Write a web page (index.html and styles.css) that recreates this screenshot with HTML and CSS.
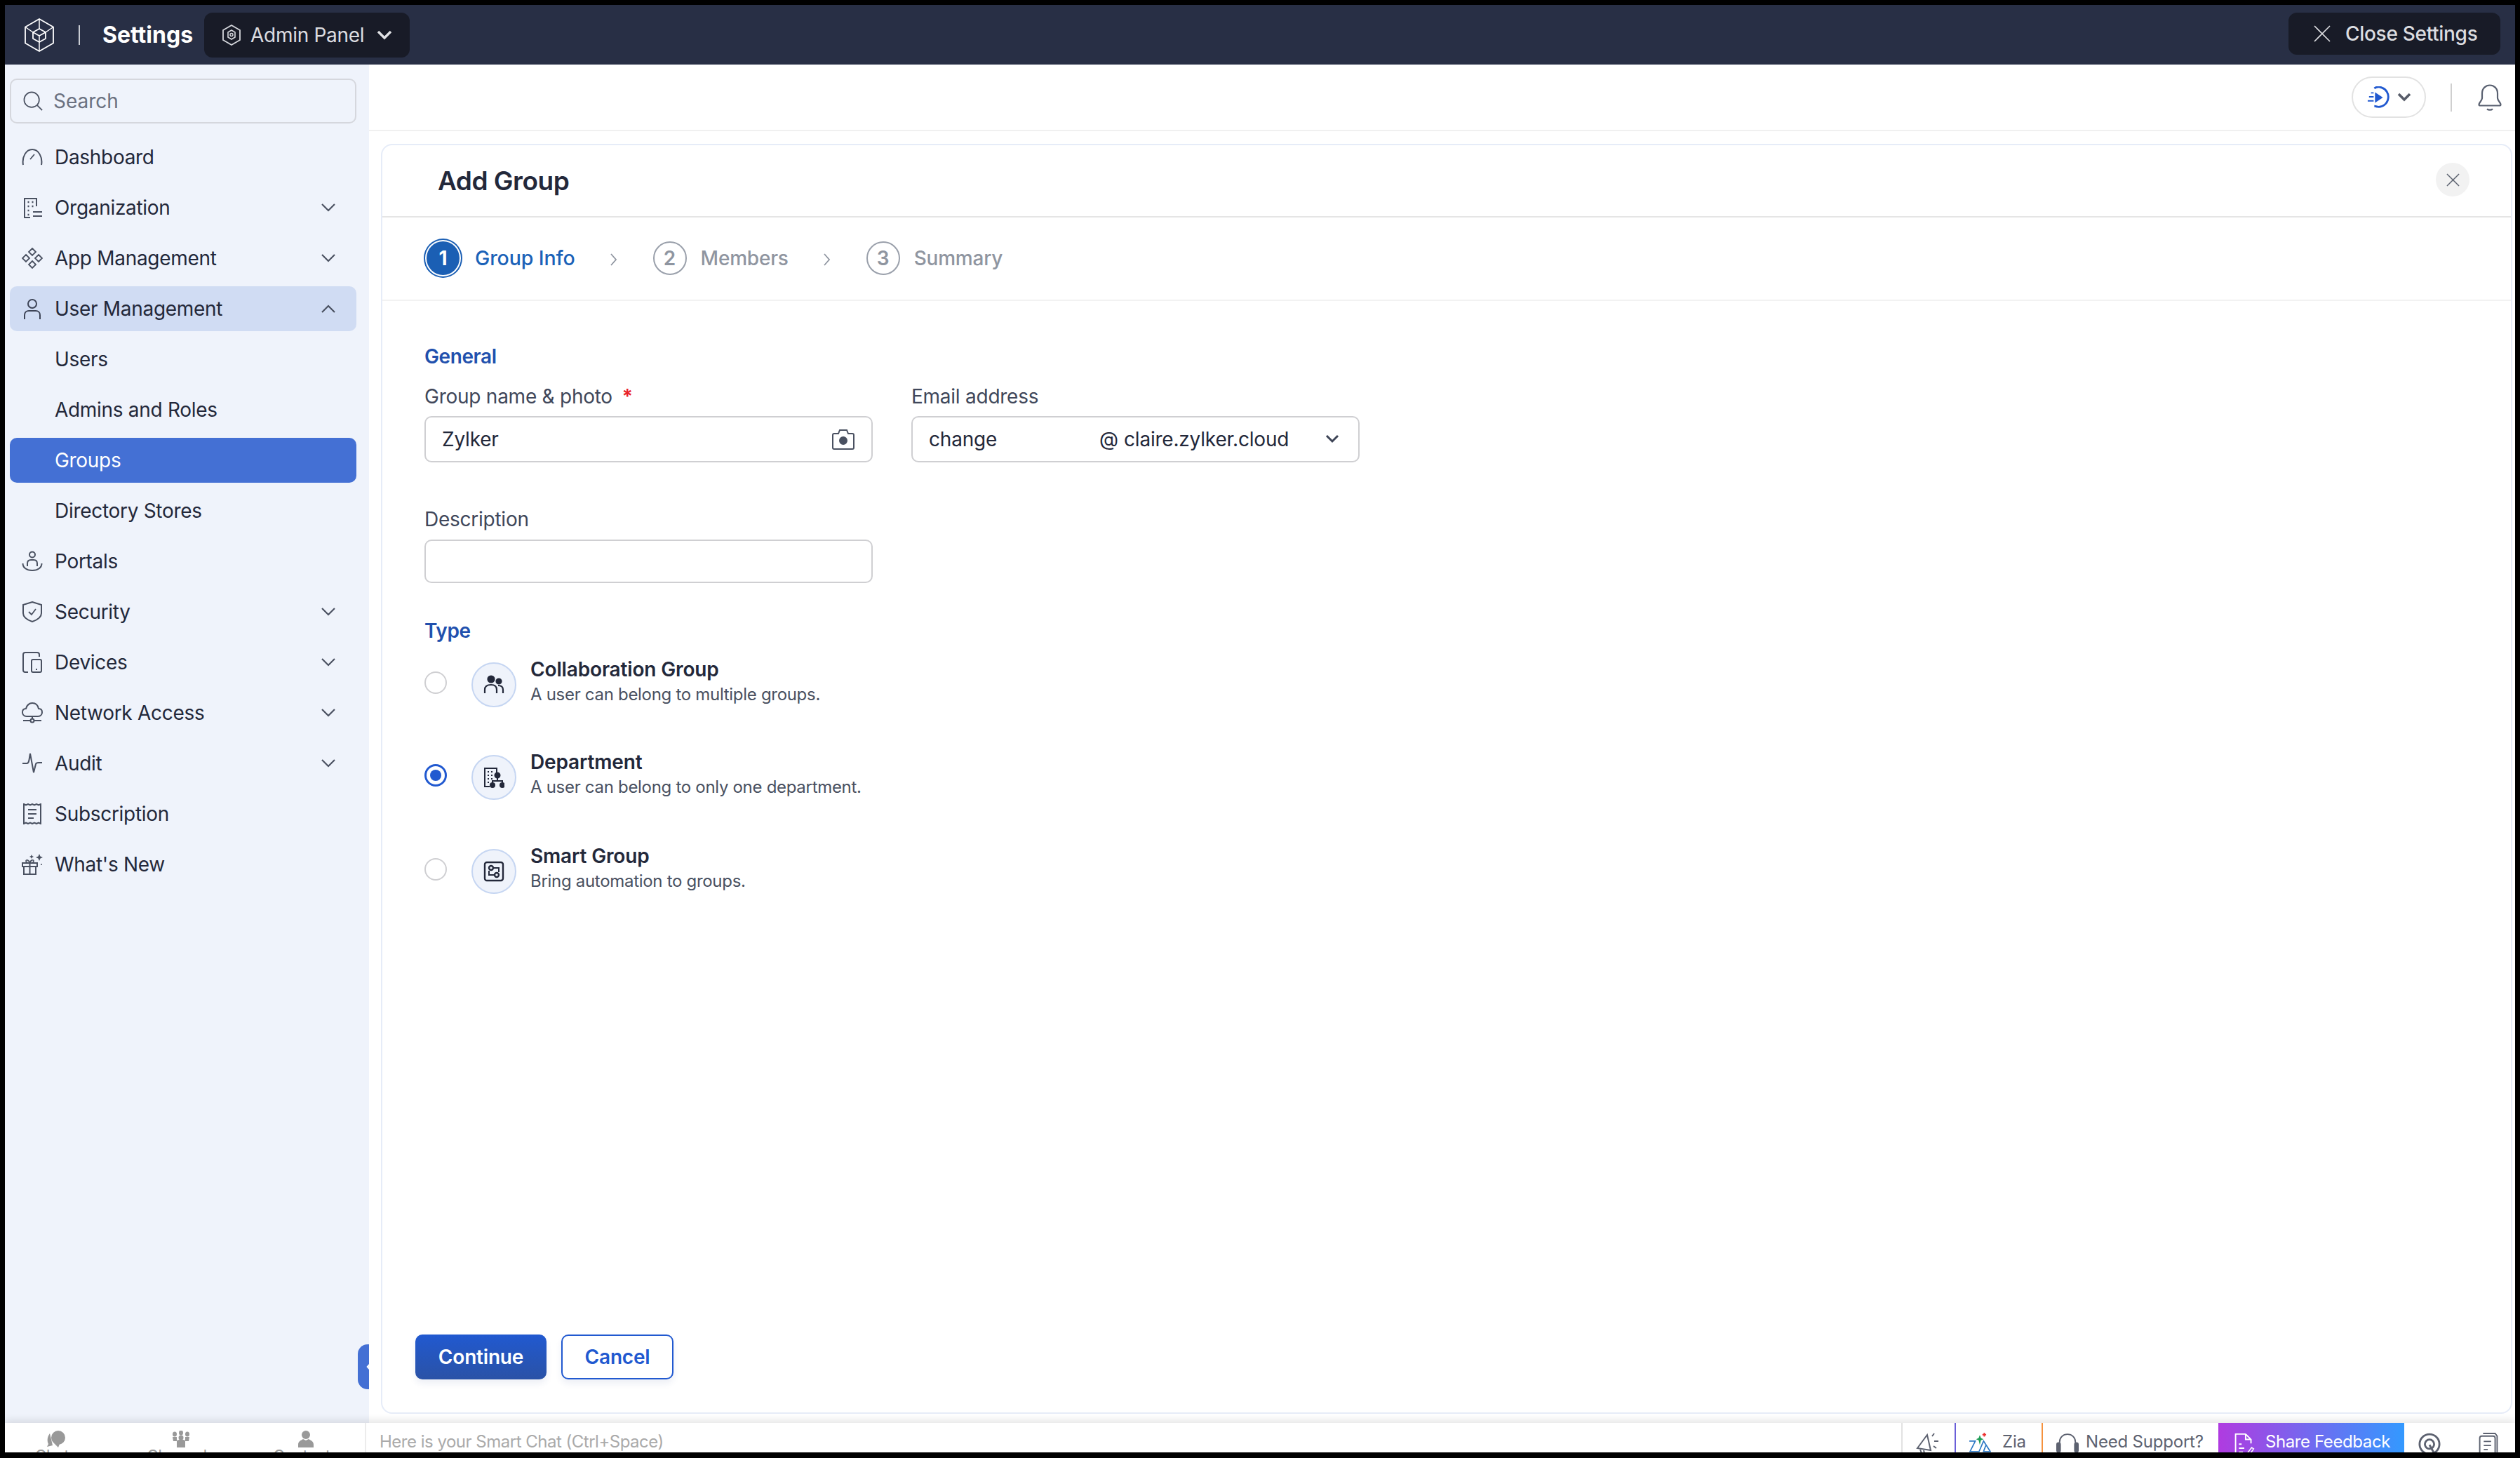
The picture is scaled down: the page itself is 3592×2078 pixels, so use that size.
FILE: index.html
```html
<!DOCTYPE html>
<html lang="en">

<head>
  <meta charset="UTF-8">
  <meta name="viewport" content="width=device-width, initial-scale=1.0">
  <title>Add Group</title>
  <link rel="stylesheet" href="styles.css">
</head>

<body>
  <div class="app">
    <div class="top_bar">
      <svg class="logo" viewBox="0 0 42 48" fill="none" stroke="#fff" stroke-width="1.8" stroke-linejoin="round">
        <path d="M21 1 41 12.5V35.5L21 47 1 35.5V12.5Z" />
        <path d="M21 15 30 20V29L21 34 12 29V20Z" />
        <path d="M12 20 21 25 30 20M21 25V34M21 34V47M1 12.5 12 20M41 12.5 30 20M21 1V15" stroke-width="1.5" />
      </svg>
      <div class="top_sep"></div>
      <div class="top_title">Settings</div>
      <div class="admin_btn">
        <svg class="admin_icon" viewBox="0 0 26 30" fill="none" stroke="#d5d7dc" stroke-width="1.8">
          <path d="M13 1 25 8V22L13 29 1 22V8Z" />
          <path d="M13 8 18 11V18L13 21 8 18V11Z" stroke-width="1.6" />
          <circle cx="13" cy="14.5" r="2" stroke-width="1.4" />
        </svg>
        <span>Admin Panel</span>
        <svg class="admin_arrow" viewBox="0 0 22 14" fill="none" stroke="#e2e3e6" stroke-width="3.4">
          <path d="M2 2 11 11 20 2" />
        </svg>
      </div>
      <div class="close_settings">
        <svg class="close_icon" viewBox="0 0 24 24" fill="none" stroke="#dcdde0" stroke-width="1.6">
          <path d="M1 1 23 23M23 1 1 23" />
        </svg>
        <span>Close Settings</span>
      </div>
    </div>

    <div class="middle">
      <div class="side">
        <div class="search">
          <svg class="search_icon" viewBox="0 0 30 30" fill="none" stroke="#4a5161" stroke-width="1.8">
            <circle cx="13" cy="13" r="11.5" />
            <path d="M21.5 21.5 29 29" />
          </svg>
          <span>Search</span>
        </div>

        <div class="side_item">
          <svg class="side_icon" viewBox="0 0 30 30" fill="none" stroke="#4a5161" stroke-width="2">
            <path d="M2 26C0 15 6 4 15 4s15 11 13 22" />
            <path d="M12 18 18 11" stroke-width="1.8" />
          </svg>
          <span class="side_text">Dashboard</span>
        </div>
        <div class="side_item">
          <svg class="side_icon" viewBox="0 0 30 30" fill="none" stroke="#4a5161" stroke-width="2">
            <path d="M21 13V2H4V29H12" />
            <path d="M16 21H29M16 27H29" />
            <path d="M8.5 7H10.5M14.5 7H16.5M8.5 13H10.5M14.5 13H16.5M8.5 19H10.5M8.5 25H10.5" stroke-width="2.4" />
          </svg>
          <span class="side_text">Organization</span>
          <svg class="side_arrow" viewBox="0 0 20 12" fill="none" stroke="#4a5161" stroke-width="2.2"><path d="M1 1 10 10 19 1" /></svg>
        </div>
        <div class="side_item">
          <svg class="side_icon" viewBox="0 0 30 30" fill="none" stroke="#4a5161" stroke-width="1.8">
            <path d="M15 1 20 6 15 11 10 6ZM15 19 20 24 15 29 10 24ZM6 10 11 15 6 20 1 15ZM24 10 29 15 24 20 19 15Z" />
          </svg>
          <span class="side_text">App Management</span>
          <svg class="side_arrow" viewBox="0 0 20 12" fill="none" stroke="#4a5161" stroke-width="2.2"><path d="M1 1 10 10 19 1" /></svg>
        </div>
        <div class="side_item side_open">
          <svg class="side_icon" viewBox="0 0 30 30" fill="none" stroke="#3d4456" stroke-width="2">
            <circle cx="15" cy="8" r="6" />
            <path d="M4 30V24C4 20 7 18 10 18H20C23 18 26 20 26 24V30" />
          </svg>
          <span class="side_text">User Management</span>
          <svg class="side_arrow" viewBox="0 0 20 12" fill="none" stroke="#4a5161" stroke-width="2.2"><path d="M1 11 10 2 19 11" /></svg>
        </div>
        <div class="side_item"><span class="side_text side_sub">Users</span></div>
        <div class="side_item"><span class="side_text side_sub">Admins and Roles</span></div>
        <div class="side_item side_active"><span class="side_text side_sub">Groups</span></div>
        <div class="side_item"><span class="side_text side_sub">Directory Stores</span></div>
        <div class="side_item">
          <svg class="side_icon" viewBox="0 0 30 30" fill="none" stroke="#4a5161" stroke-width="2">
            <circle cx="15" cy="5.5" r="4" />
            <path d="M1.5 18C1.5 24 7 28 15 28S28.500 24 28.500 18" />
            <path d="M8 22V18C8 15 10 13 13 13H17C20 13 22 15 22 18V22" />
          </svg>
          <span class="side_text">Portals</span>
        </div>
        <div class="side_item">
          <svg class="side_icon" viewBox="0 0 30 30" fill="none" stroke="#4a5161" stroke-width="2">
            <path d="M15 1 28 5V17C28 23 21 27 15 29 9 27 2 23 2 17V5Z" />
            <path d="M10 15 14 19 20 11" stroke-width="1.8" />
          </svg>
          <span class="side_text">Security</span>
          <svg class="side_arrow" viewBox="0 0 20 12" fill="none" stroke="#4a5161" stroke-width="2.2"><path d="M1 1 10 10 19 1" /></svg>
        </div>
        <div class="side_item">
          <svg class="side_icon" viewBox="0 0 30 30" fill="none" stroke="#4a5161" stroke-width="2">
            <path d="M9 29H5C3 29 2 28 2 26V4C2 2 3 1 5 1H22C24 1 25 2 25 4V7" />
            <rect x="14" y="11" width="14" height="18" rx="2" />
            <path d="M20 25H22" />
          </svg>
          <span class="side_text">Devices</span>
          <svg class="side_arrow" viewBox="0 0 20 12" fill="none" stroke="#4a5161" stroke-width="2.2"><path d="M1 1 10 10 19 1" /></svg>
        </div>
        <div class="side_item">
          <svg class="side_icon" viewBox="0 0 30 30" fill="none" stroke="#4a5161" stroke-width="2">
            <path d="M7 20C3 20 1 17 1 14 1 11 3 9 6 9 7 4 11 1 15 1 20 1 23 4 24 9 27 9 29 11 29 14 29 17 27 20 23 20Z" />
            <path d="M15 20V24M2 26H12M18 26H28" />
            <circle cx="15" cy="26" r="2.500" />
          </svg>
          <span class="side_text">Network Access</span>
          <svg class="side_arrow" viewBox="0 0 20 12" fill="none" stroke="#4a5161" stroke-width="2.2"><path d="M1 1 10 10 19 1" /></svg>
        </div>
        <div class="side_item">
          <svg class="side_icon" viewBox="0 0 30 30" fill="none" stroke="#4a5161" stroke-width="2">
            <path d="M1 15H7C9 15 10 13 10.500 10L12 1 17 28 20 16C20.500 14 22 14 24 14H29" />
          </svg>
          <span class="side_text">Audit</span>
          <svg class="side_arrow" viewBox="0 0 20 12" fill="none" stroke="#4a5161" stroke-width="2.2"><path d="M1 1 10 10 19 1" /></svg>
        </div>
        <div class="side_item">
          <svg class="side_icon" viewBox="0 0 30 30" fill="none" stroke="#4a5161" stroke-width="2">
            <path d="M3 1 6 2.500 9 1 12 2.500 15 1 18 2.500 21 1 24 2.500 27 1V29L24 27.500 21 29 18 27.500 15 29 12 27.500 9 29 6 27.500 3 29Z" />
            <path d="M9 9H21M9 15H21M9 21H17" />
          </svg>
          <span class="side_text">Subscription</span>
        </div>
        <div class="side_item">
          <svg class="side_icon" viewBox="0 0 30 30" fill="none" stroke="#4a5161" stroke-width="2">
            <rect x="1" y="13" width="21" height="5" />
            <path d="M3 18V29H20V18M11.500 13V29" />
            <path d="M11.500 13C8 13 6 12 6 10 6 8 10 8 11.500 13ZM11.500 13C15 13 17 12 17 10 17 8 13 8 11.500 13Z" stroke-width="1.6" />
            <path d="M25 0 26.500 3.500 30 5 26.500 6.500 25 10 23.500 6.500 20 5 23.500 3.500Z" fill="#4a5161" stroke="none" />
            <path d="M14 1 15 3 17 4 15 5 14 7 13 5 11 4 13 3Z" fill="#4a5161" stroke="none" />
            <circle cx="28" cy="15" r="1" fill="#4a5161" stroke="none" />
          </svg>
          <span class="side_text">What's New</span>
        </div>
        <div class="side_handle">
          <svg class="handle_arrow" viewBox="0 0 10 20" fill="none" stroke="#fff" stroke-width="2.4"><path d="M9 2 2 10 9 18" /></svg>
        </div>
      </div>

      <div class="content">
        <div class="sub_bar">
          <div class="play_pill">
            <svg class="play_icon" viewBox="0 0 34 34" fill="none">
              <path d="M11 3C14 1 18 0 22 2 29 4 33 11 32 18 31 26 24 32 16 31 14 31 13 30 11 30" stroke="#2159d0" stroke-width="3" />
              <path d="M12 9 24 17 12 25Z" fill="#2159d0" />
              <path d="M6 10H10M3 16H10M1 22H10" stroke="#2159d0" stroke-width="2" />
            </svg>
            <svg class="pill_arrow" viewBox="0 0 20 14" fill="none" stroke="#575c69" stroke-width="3.600"><path d="M2 2 10 10 18 2" /></svg>
          </div>
          <div class="sub_sep"></div>
          <svg class="bell" viewBox="0 0 34 38" fill="none" stroke="#596070" stroke-width="2.200">
            <path d="M1.500 29C1.500 26 5 25 6 20V13C6 6 11 1.500 17 1.500S28 6 28 13V20C29 25 32.500 26 32.500 29 32.500 30 31.500 30.500 30.500 30.500H3.500C2.500 30.500 1.500 30 1.500 29Z" />
            <path d="M13 35.500C15 37 19 37 21 35.500" />
          </svg>
        </div>

        <div class="card">
          <div class="card_head">
            <div class="card_title">Add Group</div>
            <div class="card_close">
              <svg class="card_close_icon" viewBox="0 0 20 20" fill="none" stroke="#5f6572" stroke-width="1.600"><path d="M1 1 19 19M19 1 1 19" /></svg>
            </div>
          </div>

          <div class="steps">
            <div class="step_on">
              <div class="step_on_num">1</div>
            </div>
            <div class="step_text step_text_on">Group Info</div>
            <svg class="step_arrow" viewBox="0 0 10 18" fill="none" stroke="#8f95a0" stroke-width="1.800"><path d="M1 1 8 9 1 17" /></svg>
            <div class="step_num">2</div>
            <div class="step_text">Members</div>
            <svg class="step_arrow" viewBox="0 0 10 18" fill="none" stroke="#8f95a0" stroke-width="1.800"><path d="M1 1 8 9 1 17" /></svg>
            <div class="step_num">3</div>
            <div class="step_text">Summary</div>
          </div>

          <div class="form">
            <div class="form_head">General</div>
            <div class="field_row">
              <div class="field">
                <div class="field_label">Group name &amp; photo <span class="req">*</span></div>
                <div class="field_input">
                  <span>Zylker</span>
                  <svg class="camera" viewBox="0 0 32 30" fill="none" stroke="#4a5161" stroke-width="2">
                    <path d="M3 7H9L11 2H21L23 7H29C30 7 31 8 31 9V27C31 28 30 29 29 29H3C2 29 1 28 1 27V9C1 8 2 7 3 7Z" />
                    <circle cx="16" cy="17" r="5" fill="#4a5161" />
                  </svg>
                </div>
              </div>
              <div class="field">
                <div class="field_label">Email address</div>
                <div class="field_input">
                  <span class="mail_name">change</span>
                  <span class="mail_at">@</span>
                  <span class="mail_domain">claire.zylker.cloud</span>
                  <svg class="mail_arrow" viewBox="0 0 20 14" fill="none" stroke="#3d4456" stroke-width="3"><path d="M2 2 10 10 18 2" /></svg>
                </div>
              </div>
            </div>

            <div class="field field_desc">
              <div class="field_label">Description</div>
              <div class="field_input field_input_desc"></div>
            </div>

            <div class="form_head type_head">Type</div>
            <div class="type_list">
              <div class="type_row">
                <div class="radio"></div>
                <div class="type_icon">
                  <svg viewBox="0 0 30 30" fill="none" stroke="#23283a" stroke-width="2.200">
                    <circle cx="11" cy="7" r="4.500" fill="#23283a" />
                    <circle cx="22" cy="10" r="3.500" fill="#23283a" />
                    <path d="M2 27V22C2 17 6 15 11 15S19 17 19 22V27" />
                    <path d="M21 16C25 16 28 18 28 22V27" />
                  </svg>
                </div>
                <div class="type_text">
                  <div class="type_title">Collaboration Group</div>
                  <div class="type_sub">A user can belong to multiple groups.</div>
                </div>
              </div>
              <div class="type_row">
                <div class="radio radio_on"></div>
                <div class="type_icon">
                  <svg viewBox="0 0 30 30" fill="none" stroke="#23283a" stroke-width="2">
                    <path d="M19 9V2H2V28H9" />
                    <path d="M6 7H8M11 7H13M6 12H8M11 12H13M6 17H8M11 17H13M6 22H8" stroke-width="1.800" />
                    <circle cx="20" cy="12" r="3.500" fill="#23283a" />
                    <path d="M20 15V20M13 26V20H27V26" />
                    <circle cx="13" cy="26" r="3" fill="#23283a" />
                    <circle cx="27" cy="26" r="3" fill="#23283a" />
                  </svg>
                </div>
                <div class="type_text">
                  <div class="type_title">Department</div>
                  <div class="type_sub">A user can belong to only one department.</div>
                </div>
              </div>
              <div class="type_row type_row_last">
                <div class="radio"></div>
                <div class="type_icon">
                  <svg viewBox="0 0 30 30" fill="none" stroke="#23283a" stroke-width="2.400">
                    <rect x="2" y="2" width="26" height="26" rx="3" />
                    <circle cx="11" cy="10" r="3" />
                    <circle cx="19" cy="20" r="3" />
                    <path d="M14 10H22V16M16 20H8V14" stroke-width="2" />
                  </svg>
                </div>
                <div class="type_text">
                  <div class="type_title">Smart Group</div>
                  <div class="type_sub">Bring automation to groups.</div>
                </div>
              </div>
            </div>
          </div>

          <div class="actions">
            <button type="button" class="btn_main">Continue</button>
            <button type="button" class="btn_cancel">Cancel</button>
          </div>
        </div>
      </div>
    </div>

    <div class="foot">
      <div class="foot_tabs">
        <div class="foot_tab">
          <svg viewBox="0 0 28 24" fill="#999">
            <circle cx="17" cy="10" r="10" />
            <path d="M11 18 17 24 19 19Z" />
            <path d="M5 4C1 9 1 15 3 19L1 23 9 21Z" />
          </svg>
          <div class="foot_tab_text">Chats</div>
        </div>
        <div class="foot_tab">
          <svg viewBox="0 0 28 24" fill="#999">
            <ellipse cx="14" cy="3" rx="3" ry="3.500" />
            <ellipse cx="5" cy="5" rx="3" ry="3.500" />
            <ellipse cx="23" cy="5" rx="3" ry="3.500" />
            <circle cx="14" cy="10" r="3.500" />
            <path d="M2 9H8L8 15H3ZM20 9H26L25 15H20ZM8 15C8 13 11 13 14 13S20 13 20 15V24H8Z" />
          </svg>
          <div class="foot_tab_text">Channels</div>
        </div>
        <div class="foot_tab">
          <svg viewBox="0 0 28 24" fill="#999">
            <ellipse cx="14" cy="6" rx="6" ry="6" />
            <path d="M3 24V20C3 15 7 14 10 12L14 14 18 12C21 14 25 15 25 20V24Z" />
          </svg>
          <div class="foot_tab_text">Contacts</div>
        </div>
      </div>
      <div class="foot_chat">Here is your Smart Chat (Ctrl+Space)</div>
      <div class="foot_cell foot_news">
        <svg class="news_icon" viewBox="0 0 34 30" fill="none" stroke="#5d6270" stroke-width="2">
          <path d="M2 22 16 3 21 25ZM6 24 8 29H12L11 25" />
          <path d="M23 5 26 1M26 12H32M25 19 29 22" />
        </svg>
      </div>
      <div class="foot_cell foot_zia">
        <svg class="zia_logo" viewBox="0 0 30 28" fill="none">
          <path d="M15 3 16.500 7 20 8.500 16.500 10 15 16 13.500 10 10 8.500 13.500 7Z" fill="#1f9d55" />
          <path d="M21 0V5M18.500 2.500H23.500" stroke="#e33" stroke-width="1.800" />
          <path d="M1 11H9L2 25H14L20 11 29 25H20L23 17" stroke="#2d78c4" stroke-width="1.600" />
        </svg>
        <span>Zia</span>
      </div>
      <div class="foot_cell foot_help">
        <svg class="foot_icon" viewBox="0 0 34 44" fill="none" stroke="#5d6270" stroke-width="2">
          <path d="M5 18V14C5 7 10 2 17 2S29 7 29 14V18" />
          <rect x="1" y="15" width="5" height="14" rx="2.500" fill="#5d6270" />
          <rect x="28" y="15" width="5" height="14" rx="2.500" fill="#5d6270" />
          <path d="M30 29C30 34 26 37 20 38" />
        </svg>
        <span>Need Support?</span>
      </div>
      <div class="foot_share">
        <svg class="foot_icon" viewBox="0 0 32 44" fill="none" stroke="#fff" stroke-width="2">
          <path d="M18 2H3V38H12M18 2 26 10V16M18 2V10H26" />
          <path d="M8 17H12M8 23H16M8 29H14" />
          <path d="M16 40 18 34 27 22 30 24 21 37Z" stroke-width="1.600" />
        </svg>
        <span>Share Feedback</span>
      </div>
      <div class="foot_cell foot_target">
        <svg class="foot_icon" viewBox="0 0 34 44" fill="none" stroke="#5d6270" stroke-width="3">
          <circle cx="17" cy="17" r="15" />
          <circle cx="17" cy="17" r="7" />
          <path d="M17 18 28 38" />
        </svg>
      </div>
      <div class="foot_cell foot_notes">
        <svg class="foot_icon" viewBox="0 0 30 44" fill="none" stroke="#5d6270" stroke-width="2">
          <path d="M7 1H25L28 5V29" />
          <rect x="2" y="5" width="23" height="32" rx="3" />
          <path d="M8 13H19M8 19H19M8 25H14" />
        </svg>
      </div>
    </div>
  </div>
</body>

</html>
```

FILE: styles.css
```css
* {
  box-sizing: border-box;
}

html,
body {
  margin: 0;
  height: 100%;
}

body {
  padding: 7px 7px 8px 7px;
  background-color: black;
  overflow: hidden;
  font-family: Inter, "Noto Sans", sans-serif;
  font-size: 28px;
  color: #23283a;
}

.app {
  width: 3578px;
  height: 2063px;

  display: flex;
  flex-direction: column;

  background-color: white;
  overflow: hidden;
}

/* top bar */
.top_bar {
  height: 85px;
  flex: none;

  display: flex;
  align-items: center;

  padding: 0 21px 0 28px;
  background-color: #282f45;
  color: white;
}

.logo {
  width: 42px;
  height: 48px;
}

.top_sep {
  width: 2px;
  height: 28px;
  margin-left: 35px;
  background-color: #c9ccd3;
}

.top_title {
  margin-left: 32px;
  font-size: 32px;
  font-weight: 700;
}

.admin_btn {
  width: 293px;
  height: 64px;
  margin-left: 16px;

  display: flex;
  align-items: center;

  padding-left: 26px;
  border-radius: 12px;
  background-color: #181b27;
  color: #dcdde0;
  font-size: 28px;
  letter-spacing: -0.3px;
}

.admin_icon {
  width: 26px;
  height: 30px;
  margin-right: 14px;
}

.admin_arrow {
  width: 22px;
  height: 14px;
  margin-left: 18px;
}

.close_settings {
  width: 302px;
  height: 60px;
  margin-left: auto;
  margin-top: -4px;

  display: flex;
  align-items: center;

  padding-left: 36px;
  border-radius: 12px;
  background-color: #181b27;
  color: #dcdde0;
  font-size: 28px;
  font-weight: 500;
  letter-spacing: -0.3px;
}

.close_icon {
  width: 24px;
  height: 24px;
  margin-right: 21px;
}

.middle {
  flex: 1;
  min-height: 0;

  display: flex;
}

/* side menu */
.side {
  width: 519px;
  flex: none;
  position: relative;

  padding: 20px 18px 0 7px;
  background-color: #eff3fb;
}

.search {
  height: 64px;
  margin-bottom: 16px;

  display: flex;
  align-items: center;

  padding-left: 17px;
  border: 2px solid #d5d7dd;
  border-radius: 10px;
  color: #6b7180;
}

.search_icon {
  width: 28px;
  height: 28px;
  margin-right: 15px;
}

.side_item {
  height: 64px;
  margin-bottom: 8px;

  display: flex;
  align-items: center;

  padding: 0 30px 0 17px;
  border-radius: 10px;
  letter-spacing: -0.3px;
}

.side_icon {
  width: 30px;
  height: 30px;
  flex: none;
  margin-right: 17px;
}

.side_sub {
  margin-left: 47px;
}

.side_arrow {
  width: 20px;
  height: 12px;
  margin-left: auto;
}

.side_open {
  background-color: #d0dcf3;
}

.side_active {
  background-color: #4470d4;
  color: white;
}

.side_handle {
  width: 16px;
  height: 64px;

  position: absolute;
  right: 0;
  bottom: 48px;

  border-radius: 14px 0 0 14px;
  background-color: #4470d4;
  overflow: hidden;
}

.handle_arrow {
  width: 10px;
  height: 20px;

  position: absolute;
  left: 12px;
  top: 22px;
}

/* main area */
.content {
  flex: 1;
  min-width: 0;

  display: flex;
  flex-direction: column;

  padding-left: 17px;
}

.sub_bar {
  height: 95px;
  flex: none;
  margin-left: -17px;

  display: flex;
  align-items: center;
  justify-content: flex-end;

  padding: 0 19px 0 0;
  border-bottom: 2px solid #f0f0f0;
}

.play_pill {
  width: 106px;
  height: 59px;

  display: flex;
  align-items: center;

  padding-left: 20px;
  border: 2px solid #e2e2e2;
  border-radius: 30px;
}

.play_icon {
  width: 32px;
  height: 32px;
}

.pill_arrow {
  width: 20px;
  height: 14px;
  margin-left: 11px;
}

.sub_sep {
  width: 2px;
  height: 40px;
  margin-left: 35px;
  background-color: #cfcfcf;
}

.bell {
  width: 34px;
  height: 38px;
  margin-left: 37px;
}

.card {
  height: 1810px;
  flex: none;
  width: 3038px;
  margin-top: 18px;

  display: flex;
  flex-direction: column;

  border: 2px solid #e6ecf8;
  border-radius: 16px;
}

.card_head {
  height: 103px;
  flex: none;

  display: flex;
  align-items: center;
  justify-content: space-between;

  padding: 0 59px 0 79px;
  border-bottom: 2px solid #e5e5e5;
}

.card_title {
  font-size: 37px;
  font-weight: 600;
  letter-spacing: -0.5px;
}

.card_close {
  width: 48px;
  height: 48px;
  margin-top: -3px;

  display: flex;
  justify-content: center;
  align-items: center;

  border-radius: 50%;
  background-color: #f2f2f2;
}

.card_close_icon {
  width: 19px;
  height: 19px;
}

.steps {
  height: 119px;
  flex: none;

  display: flex;
  align-items: center;

  padding: 0 0 2px 59px;
  border-bottom: 2px solid #f2f2f2;
}

.step_on {
  width: 55px;
  height: 56px;

  display: flex;
  justify-content: center;
  align-items: center;

  border: 2px solid #1b5fb4;
  border-radius: 50%;
}

.step_on_num {
  width: 47px;
  height: 48px;

  display: flex;
  justify-content: center;
  align-items: center;

  border-radius: 50%;
  background-color: #1b5fb4;
  color: white;
  font-weight: 700;
}

.step_text {
  margin-left: 20px;
  color: #8f95a0;
  font-weight: 500;
  letter-spacing: -0.2px;
}

.step_text_on {
  margin-left: 18px;
  color: #1b62b8;
  font-size: 28.5px;
  letter-spacing: -0.1px;
}

.step_arrow {
  width: 10px;
  height: 18px;
  margin: 4px 51px 0 50px;
}

.step_num {
  width: 48px;
  height: 48px;

  display: flex;
  justify-content: center;
  align-items: center;

  border: 2px solid #9aa0ab;
  border-radius: 50%;
  color: #8f95a0;
  font-weight: 600;
}

/* form */
.form {
  padding: 61px 0 0 60px;
}

.form_head {
  height: 36px;
  line-height: 36px;
  color: #2150ad;
  font-weight: 600;
  letter-spacing: -0.4px;
}

.field_row {
  margin-top: 21px;

  display: flex;
  gap: 55px;
}

.field {
  width: 639px;
}

.field_label {
  height: 36px;
  line-height: 36px;
  margin-bottom: 10px;
  color: #40475a;
  letter-spacing: -0.25px;
}

.req {
  margin-left: 6px;
  color: #e8232a;
  font-weight: 700;
}

.field_input {
  height: 66px;

  display: flex;
  align-items: center;

  padding: 0 24px 0 23px;
  border: 2px solid #cfcfd2;
  border-radius: 10px;
  letter-spacing: -0.2px;
}

.camera {
  width: 32px;
  height: 30px;
  margin-left: auto;
}

.mail_name {
  width: 243px;
}

.mail_at {
  width: 35px;
}

.mail_arrow {
  width: 20px;
  height: 14px;
  margin-left: auto;
  margin-right: 3px;
}

.field_desc {
  margin-top: 63px;
}

.field_input_desc {
  height: 62px;
  margin-top: 11px;
}

.type_head {
  margin-top: 50px;
}

.type_list {
  margin-top: 27px;

  display: flex;
  flex-direction: column;
  gap: 68px;
}

.type_row {
  height: 64px;

  display: flex;
  align-items: flex-start;
}

.type_row_last {
  margin-top: 2px;
}

.radio {
  width: 32px;
  height: 32px;
  margin-top: 13px;
  margin-right: 35px;

  border: 2px solid #cfcfd2;
  border-radius: 50%;
}

.radio_on {
  border: 3px solid #2159d0;
  padding: 5px;
  background-clip: content-box;
  background-color: #2159d0;
}

.type_icon {
  width: 64px;
  height: 64px;
  margin-right: 20px;

  display: flex;
  justify-content: center;
  align-items: center;

  border: 2px solid #c6d6f2;
  border-radius: 50%;
  background-color: #eff3fb;
}

.type_icon svg {
  width: 30px;
  height: 30px;
}

.type_text {
  margin-top: -8px;
}

.type_title {
  height: 36px;
  line-height: 36px;
  font-weight: 600;
  letter-spacing: -0.15px;
}

.type_sub {
  height: 32px;
  line-height: 32px;
  margin-top: 2px;
  color: #4a5161;
  font-size: 24px;
  letter-spacing: -0.3px;
}

.actions {
  margin-top: auto;
  padding: 0 0 47px 47px;

  display: flex;
  gap: 21px;
}

button {
  height: 64px;
  font-family: Inter, "Noto Sans", sans-serif;
  font-size: 28px;
  font-weight: 600;
  border-radius: 10px;
  letter-spacing: -0.2px;
  box-shadow: 0 6px 10px rgba(40, 70, 140, 0.08);
}

.btn_main {
  width: 187px;
  border: none;
  background: linear-gradient(#2159d0, #2a52a6);
  color: white;
}

.btn_cancel {
  width: 160px;
  border: 2px solid #2159d0;
  background-color: white;
  color: #2159d0;
}

/* bottom bar */
.foot {
  height: 42px;
  flex: none;
  position: relative;

  display: flex;

  background-color: white;
  box-shadow: 0 -4px 10px rgba(0, 0, 0, 0.1);
  overflow: hidden;
}

.foot_tabs {
  width: 513px;
  flex: none;

  display: flex;
  gap: 38px;

  padding-left: 3px;
}

.foot_tab {
  width: 140px;
  padding-top: 11px;
  text-align: center;
  color: #999;
  font-size: 22px;
}

.foot_tab svg {
  display: block;
  width: 28px;
  height: 24px;
  margin: 0 auto;
}

.foot_tab_text {
  line-height: 22px;
}

.foot_chat {
  flex: 1;
  padding: 8px 0 0 19px;
  border-left: 2px solid #ececec;
  color: #aaaaaa;
  font-size: 24px;
  line-height: 38px;
  letter-spacing: -0.5px;
}

.foot_cell {
  flex: none;

  display: flex;
  align-items: flex-start;

  padding-top: 14px;
  color: #5d6270;
  font-size: 24px;
  line-height: 26px;
  letter-spacing: -0.2px;
}

.foot_icon {
  width: 32px;
  height: 42px;
  flex: none;
}

.news_icon {
  width: 34px;
  height: 30px;
  flex: none;
}

.foot_news {
  width: 76px;
  padding-left: 19px;
  border-left: 2px solid #e2e2e2;
}

.foot_zia {
  width: 124px;
  padding-left: 18px;
  border-left: 2px solid #6a5fd8;
}

.zia_logo {
  width: 32px;
  height: 30px;
  margin-right: 16px;
}

.foot_help {
  width: 252px;
  padding-left: 19px;
  border-left: 2px solid #f5923e;
}

.foot_help .foot_icon {
  margin-right: 10px;
}

.foot_share {
  width: 265px;
  flex: none;

  display: flex;
  align-items: flex-start;

  padding: 14px 0 0 21px;
  background: linear-gradient(90deg, #b03be0, #3399ff);
  color: white;
  font-size: 24px;
  line-height: 26px;
  letter-spacing: -0.4px;
}

.foot_share .foot_icon {
  margin-right: 14px;
}

.foot_target {
  width: 88px;
  padding-left: 20px;
}

.foot_notes {
  width: 70px;
  padding-left: 16px;
}
```
